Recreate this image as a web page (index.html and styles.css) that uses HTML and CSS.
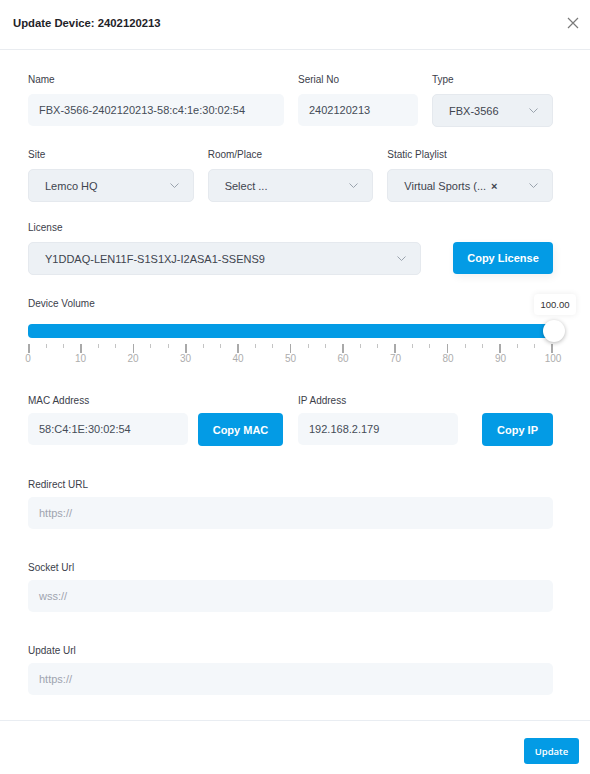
FILE: index.html
```html
<!DOCTYPE html>
<html lang="en">
<head>
<meta charset="utf-8">
<title>Update Device</title>
<link rel="stylesheet" href="styles.css">
</head>
<body>
<div class="modal">
  <header class="modal-header">
    <h1 class="modal-title">Update Device: 2402120213</h1>
    <button class="close" aria-label="Close">
      <svg width="12" height="12" viewBox="0 0 12 12"><path d="M1 1 L11 11 M11 1 L1 11" stroke="#7a7a7a" stroke-width="1.2" fill="none"/></svg>
    </button>
  </header>

  <main class="modal-body">
    <div class="row row-1">
      <div class="field">
        <label class="label">Name</label>
        <div class="input">FBX-3566-2402120213-58:c4:1e:30:02:54</div>
      </div>
      <div class="field">
        <label class="label">Serial No</label>
        <div class="input">2402120213</div>
      </div>
      <div class="field">
        <label class="label">Type</label>
        <div class="select"><span>FBX-3566</span><svg class="chev" width="9" height="5" viewBox="0 0 9 5"><path d="M0.5 0.5 L4.5 4.5 L8.5 0.5" stroke="#9aa3ad" stroke-width="1" fill="none"/></svg></div>
      </div>
    </div>

    <div class="row row-2">
      <div class="field">
        <label class="label">Site</label>
        <div class="select"><span>Lemco HQ</span><svg class="chev" width="9" height="5" viewBox="0 0 9 5"><path d="M0.5 0.5 L4.5 4.5 L8.5 0.5" stroke="#9aa3ad" stroke-width="1" fill="none"/></svg></div>
      </div>
      <div class="field">
        <label class="label">Room/Place</label>
        <div class="select"><span>Select ...</span><svg class="chev" width="9" height="5" viewBox="0 0 9 5"><path d="M0.5 0.5 L4.5 4.5 L8.5 0.5" stroke="#9aa3ad" stroke-width="1" fill="none"/></svg></div>
      </div>
      <div class="field">
        <label class="label">Static Playlist</label>
        <div class="select"><span>Virtual Sports (... <b class="x">×</b></span><svg class="chev" width="9" height="5" viewBox="0 0 9 5"><path d="M0.5 0.5 L4.5 4.5 L8.5 0.5" stroke="#9aa3ad" stroke-width="1" fill="none"/></svg></div>
      </div>
    </div>

    <div class="row row-3">
      <div class="field">
        <label class="label">License</label>
        <div class="select"><span>Y1DDAQ-LEN11F-S1S1XJ-I2ASA1-SSENS9</span><svg class="chev" width="9" height="5" viewBox="0 0 9 5"><path d="M0.5 0.5 L4.5 4.5 L8.5 0.5" stroke="#9aa3ad" stroke-width="1" fill="none"/></svg></div>
      </div>
      <button class="btn btn-license">Copy License</button>
    </div>

    <div class="volume">
      <label class="label">Device Volume</label>
      <div class="slider">
        <div class="track"></div>
        <div class="thumb"></div>
        <div class="tooltip">100.00</div>
      </div>
      <div class="ticks">
        <i class="major"></i><i></i><i></i><i class="major"></i><i></i><i></i><i class="major"></i><i></i><i></i><i class="major"></i><i></i><i></i><i class="major"></i><i></i><i></i><i class="major"></i><i></i><i></i><i class="major"></i><i></i><i></i><i class="major"></i><i></i><i></i><i class="major"></i><i></i><i></i><i class="major"></i><i></i><i></i><i class="major"></i>
      </div>
      <div class="tick-labels">
        <span><em>0</em></span><span><em>10</em></span><span><em>20</em></span><span><em>30</em></span><span><em>40</em></span><span><em>50</em></span><span><em>60</em></span><span><em>70</em></span><span><em>80</em></span><span><em>90</em></span><span><em>100</em></span>
      </div>
    </div>

    <div class="row row-net">
      <div class="field">
        <label class="label">MAC Address</label>
        <div class="input w160">58:C4:1E:30:02:54</div>
      </div>
      <button class="btn btn-mac">Copy MAC</button>
      <div class="field">
        <label class="label">IP Address</label>
        <div class="input w160">192.168.2.179</div>
      </div>
      <button class="btn btn-ip">Copy IP</button>
    </div>

    <div class="field url first">
      <label class="label">Redirect URL</label>
      <div class="input placeholder">https://</div>
    </div>
    <div class="field url">
      <label class="label">Socket Url</label>
      <div class="input placeholder">wss://</div>
    </div>
    <div class="field url">
      <label class="label">Update Url</label>
      <div class="input placeholder">https://</div>
    </div>
  </main>

  <footer class="modal-footer">
    <button class="btn btn-update">Update</button>
  </footer>
</div>
</body>
</html>
```

FILE: styles.css
```css
* { box-sizing: border-box; }

body {
  margin: 0;
  background: #ffffff;
  font-family: "Liberation Sans", Arial, sans-serif;
  color: #333a44;
}

.modal {
  width: 590px;
  background: #fff;
}

.modal-header {
  height: 50px;
  padding: 0 11px 4px 13px;
  border-bottom: 1px solid #e9ecf0;
  display: flex;
  align-items: center;
  justify-content: space-between;
}

.modal-title {
  margin: 0;
  font-size: 11.3px;
  font-weight: bold;
  color: #1f2329;
}

.close {
  border: 0;
  background: none;
  padding: 0;
  width: 12px;
  height: 12px;
  display: flex;
  cursor: pointer;
}

.modal-body {
  padding: 24px 37px 25px 28px;
}

.field {
  display: flex;
  flex-direction: column;
}

.label {
  display: block;
  font-size: 10px;
  line-height: 12px;
  margin-bottom: 8px;
  color: #3b404a;
}

.input {
  height: 32px;
  border-radius: 5px;
  background: #f4f7fa;
  padding: 0 11px;
  font-size: 11px;
  color: #454c57;
  display: flex;
  align-items: center;
  white-space: nowrap;
}

.input.placeholder {
  color: #9ea4af;
}

.w160 { width: 160px; }

.select {
  height: 33px;
  border-radius: 5px;
  background: #edf1f5;
  border: 1px solid #e5e9ee;
  padding: 0 14px 0 16px;
  font-size: 11px;
  color: #3e444e;
  display: flex;
  align-items: center;
  justify-content: space-between;
  white-space: nowrap;
}

.select .x {
  font-size: 11px;
  margin-left: 2px;
}

.row { display: grid; }

.row-1 {
  grid-template-columns: 256px 120px 1fr;
  column-gap: 14px;
}

.row-2 {
  margin-top: 22px;
  grid-template-columns: 1fr 1fr 1fr;
  column-gap: 14px;
}

.row-3 {
  margin-top: 20px;
  grid-template-columns: 1fr 100px;
  column-gap: 32px;
  align-items: end;
}

.btn {
  border: 0;
  background: #039be5;
  color: #fff;
  font-family: "Liberation Sans", Arial, sans-serif;
  font-weight: bold;
  font-size: 11px;
  border-radius: 4px;
  height: 33px;
  padding: 0;
  cursor: pointer;
}

.btn-license {
  height: 32px;
  margin-bottom: 1px;
  box-shadow: 2px 3px 8px rgba(0, 0, 0, 0.06);
}

.volume {
  margin-top: 23px;
}

.volume .label { margin-bottom: 14px; }

.slider {
  position: relative;
  height: 14px;
}

.track {
  height: 14px;
  border-radius: 4px;
  background: #039be5;
}

.thumb {
  position: absolute;
  right: -12px;
  top: -4px;
  width: 22px;
  height: 22px;
  border-radius: 50%;
  background: #fff;
  box-shadow: 0 1px 4px rgba(0, 0, 0, 0.3);
}

.tooltip {
  position: absolute;
  right: -23px;
  top: -30px;
  width: 42px;
  height: 21px;
  border-radius: 4px;
  background: #fff;
  box-shadow: 0 0 6px rgba(0, 0, 0, 0.08);
  font-size: 9.5px;
  color: #333;
  display: flex;
  align-items: center;
  justify-content: center;
}

.ticks {
  margin-top: 6px;
  height: 9px;
  display: flex;
  justify-content: space-between;
  align-items: flex-start;
}

.ticks i {
  display: block;
  width: 1px;
  height: 4px;
  background: #c4c4c4;
}

.ticks i.major {
  height: 9px;
  width: 1.5px;
  background: #a9a9a9;
}

.tick-labels {
  display: flex;
  justify-content: space-between;
  height: 11px;
  font-size: 10px;
  line-height: 11px;
  color: #adadad;
}

.tick-labels span {
  width: 0;
  display: flex;
  justify-content: center;
}

.tick-labels em {
  font-style: normal;
  white-space: nowrap;
}

.row-net {
  margin-top: 31px;
  grid-template-columns: 170px 100px 184px 71px;
  align-items: end;
}

.row-net .label,
.url .label { margin-bottom: 6px; }

.btn-mac { width: 85px; margin-bottom: -1px; }
.btn-ip { width: 71px; margin-bottom: -1px; }

.url { margin-top: 33px; }
.url.first { margin-top: 34px; }

.modal-footer {
  border-top: 1px solid #e9edf2;
  padding: 17px 11px 11px;
  display: flex;
  justify-content: flex-end;
}

.btn-update {
  width: 55px;
  height: 26px;
  font-family: "Open Sans", sans-serif;
  font-weight: 600;
  font-size: 9.5px;
  border-radius: 3px;
}
```
